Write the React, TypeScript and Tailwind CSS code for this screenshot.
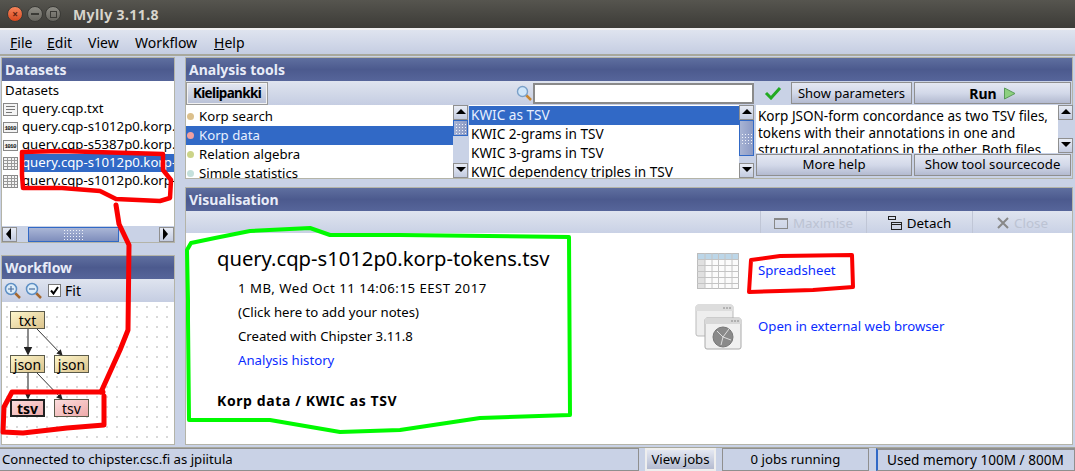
import React from "react";

const btn = "flex items-center justify-center border border-[#8f8f8f] bg-gradient-to-b from-[#e4e8f2] via-[#d3d9e9] to-[#b3bad0] text-black";

function Header({ children }: { children: React.ReactNode }) {
  return (
    <div className="h-[23px] shrink-0 flex items-center pl-[3px] text-[14px] font-bold text-[#e8ecf8] bg-gradient-to-b from-[#5f6f9f] via-[#4c5a8e] to-[#56659a]">
      {children}
    </div>
  );
}

function Arrow({ dir }: { dir: "up" | "down" | "left" | "right" }) {
  const p = { up: "1,7 6,2 11,7", down: "1,2 6,7 11,2", left: "7,0 2,6 7,12", right: "2,0 7,6 2,12" }[dir];
  return (
    <svg width="12" height="12" viewBox="0 0 12 12" className="block">
      <polygon points={p} fill="#000" />
    </svg>
  );
}

function ScrollBtn({ dir }: { dir: "up" | "down" | "left" | "right" }) {
  return (
    <div className="w-[15px] h-[15px] shrink-0 flex items-center justify-center border border-[#8f8f8f] bg-gradient-to-b from-[#e8ecf5] to-[#c3cbe0]">
      <Arrow dir={dir} />
    </div>
  );
}

function Dots() {
  return <div className="w-[11px] h-[11px] bg-[radial-gradient(#f0f3fa_0.8px,transparent_1px)] bg-[length:3px_3px]" />;
}

function VScroll({ thumb }: { thumb: number }) {
  return (
    <div className="w-[15px] shrink-0 flex flex-col bg-[#c9d2e6]">
      <ScrollBtn dir="up" />
      <div className="flex-1 min-h-0">
        {thumb > 0 && (
          <div
            className="border border-[#3169c6] bg-gradient-to-r from-[#a8b4d4] to-[#8c9ac4] flex items-center justify-center overflow-hidden"
            style={{ height: thumb }}
          >
            <Dots />
          </div>
        )}
      </div>
      <ScrollBtn dir="down" />
    </div>
  );
}

function Row({ icon, children, selected }: { icon: React.ReactNode; children: React.ReactNode; selected?: boolean }) {
  return (
    <div className="h-[18px] flex items-center whitespace-nowrap relative">
      <div className="w-[20px] shrink-0 flex justify-start pl-[1px]">{icon}</div>
      <div className={`flex-1 h-[18px] flex items-center overflow-hidden ${selected ? "bg-[#3169c6] text-white" : ""}`}>{children}</div>
    </div>
  );
}

function DocIcon() {
  return (
    <svg width="15" height="13" viewBox="0 0 15 13">
      <rect x="0.5" y="0.5" width="14" height="12" fill="#f4f4f4" stroke="#888" />
      <path d="M3 3.5h9M3 6.500h9M3 9.500h6" stroke="#777" />
    </svg>
  );
}
function BinIcon() {
  return (
    <svg width="15" height="13" viewBox="0 0 15 13">
      <rect x="0.5" y="1.5" width="14" height="10" fill="#f4f4f4" stroke="#888" />
      <text x="1.5" y="9" fontSize="6" fontWeight="700" fontFamily="Liberation Mono" fill="#111" textLength="12">1010</text>
    </svg>
  );
}
function TableIcon() {
  return (
    <svg width="15" height="13" viewBox="0 0 15 13">
      <rect x="0.5" y="0.5" width="14" height="12" fill="#f4f4f4" stroke="#888" />
      <path d="M0.5 3.5h14M0.5 6.500h14M0.5 9.500h14M4.500 0.5v12M8.500 0.5v12M11.500 0.5v12" stroke="#999" />
    </svg>
  );
}

function Zoom({ plus }: { plus: boolean }) {
  return (
    <svg width="18" height="18" viewBox="0 0 18 18">
      <path d="M10.500 10.500l5.500 5.500" stroke="#a5682f" strokeWidth="2.5" />
      <circle cx="7" cy="7" r="5.5" fill="#dcecf8" stroke="#5d8fc4" strokeWidth="1.5" />
      <path d={plus ? "M4 7h6M7 4v6" : "M4 7h6"} stroke="#4a6d9e" strokeWidth="1.2" />
    </svg>
  );
}

function Node({ label, x, y, pink, bold }: { label: string; x: number; y: number; pink?: boolean; bold?: boolean }) {
  return (
    <div
      className={`absolute w-[35px] h-[18px] flex items-center justify-center text-[14px] ${
        pink ? "bg-gradient-to-br from-[#fbdcdc] to-[#eeaaaa]" : "bg-gradient-to-br from-[#fdf6cc] to-[#dcc48c]"
      } ${bold ? "border-2 border-[#222] font-bold" : "border border-[#5a5a4a]"}`}
      style={{ left: x, top: y }}
    >
      {label}
    </div>
  );
}

function ToolItem({ color, children, selected }: { color: string; children: React.ReactNode; selected?: boolean }) {
  return (
    <div className={`h-[19px] shrink-0 flex items-center ${selected ? "bg-[#3169c6] text-[#e8f0ff]" : ""}`}>
      <span className="w-[7px] h-[7px] rounded-full ml-[1px] mr-[5px]" style={{ background: color }} />
      {children}
    </div>
  );
}

function Overlay() {
  return (
    <svg className="absolute left-0 top-0 pointer-events-none" width="1075" height="471" fill="none" strokeLinejoin="round" strokeLinecap="round">
      <path
        d="M22 152 L60 151 L163 154 L163 170 L171 180 L170 198 L160 201 L116 199 L100 191 L62 188 L23 188 L22 175 Z"
        stroke="#fb0000"
        strokeWidth="4.5"
      />
      <path d="M116 205 L119 224 L129 245 L128 330 L120 350 L101 392" stroke="#fb0000" strokeWidth="5" />
      <path d="M103 392 L40 392 L12 392 L4 407 L3 432 L23 433 L67 428 L104 425 L104 396" stroke="#fb0000" strokeWidth="5" />
      <path
        d="M188 300 L187 250 L191 243 L215 238 L250 231 L310 228 L330 235 L400 235 L569 237 L570 415 L480 418 L400 430 L340 432 L270 420 L189 420 L188 320 Z"
        stroke="#00fa00"
        strokeWidth="4"
      />
      <path d="M749 292 L751 260 L780 256 L852 255 L853 287 L813 290 L780 291 Z" stroke="#fb0000" strokeWidth="4" />
    </svg>
  );
}

export default function App() {
  return (
    <div className="relative w-[1075px] h-[471px] overflow-hidden flex flex-col bg-[#c9d2e6] text-[13.2px] text-black [font-family:'Noto_Sans','Open_Sans',sans-serif]">
      {/* title bar */}
      <div className="h-[28px] shrink-0 flex items-center bg-gradient-to-b from-[#56554f] to-[#3c3b37]">
        <span className="ml-[7px] w-[16px] h-[16px] rounded-full bg-gradient-to-b from-[#f5845a] to-[#d9481c] border border-[#3a3a36] flex items-center justify-center text-[10px] leading-none text-[#5a2210] font-bold">×</span>
        <span className="ml-[4px] w-[16px] h-[16px] rounded-full bg-gradient-to-b from-[#8d8c85] to-[#65645e] border border-[#3a3a36] flex items-center justify-center">
          <span className="w-[8px] h-[2px] bg-[#3a3a36]" />
        </span>
        <span className="ml-[2px] w-[16px] h-[16px] rounded-full bg-gradient-to-b from-[#8d8c85] to-[#65645e] border border-[#3a3a36] flex items-center justify-center">
          <span className="w-[7px] h-[7px] border border-[#3a3a36]" />
        </span>
        <span className="ml-[12px] text-[14px] font-bold tracking-[0.4px] text-[#d8d5cc]">Mylly 3.11.8</span>
      </div>
      {/* menu */}
      <div className="h-[28px] shrink-0 flex items-center pl-[10px] text-[14px] border-t-2 border-b-2 border-t-[#f0f0f0] border-b-[#a8a89c] bg-gradient-to-b from-[#dfe4ef] to-[#c5cde2]">
        <span className="w-[37px]"><u>F</u>ile</span>
        <span className="w-[41px]"><u>E</u>dit</span>
        <span className="w-[47px]">View</span>
        <span className="w-[79px]">Workflow</span>
        <span><u>H</u>elp</span>
      </div>
      {/* main */}
      <div className="flex-1 min-h-0 flex pt-[1px] pb-[2px] pl-[1px] pr-[2px] gap-[10px]">
        {/* left */}
        <div className="w-[174px] shrink-0 flex flex-col gap-[12px]">
          <div className="h-[186px] shrink-0 flex flex-col border border-[#b4b4a8]">
            <Header>Datasets</Header>
            <div className="flex-1 min-h-0 bg-white overflow-hidden pt-[1px]">
              <div className="h-[18px] flex items-center pl-[3px]">Datasets</div>
              <Row icon={<DocIcon />}>query.cqp.txt</Row>
              <Row icon={<BinIcon />}>query.cqp-s1012p0.korp.json</Row>
              <Row icon={<BinIcon />}>query.cqp-s5387p0.korp.json</Row>
              <Row icon={<TableIcon />} selected>query.cqp-s1012p0.korp-tokens.tsv</Row>
              <Row icon={<TableIcon />}>query.cqp-s1012p0.korp-tokens.tsv</Row>
            </div>
            <div className="h-[16px] shrink-0 flex bg-[#c9d2e6] pt-[0.5px]">
              <ScrollBtn dir="left" />
              <div className="flex-1 pl-[11px]">
                <div className="w-[91px] h-[15px] border border-[#3169c6] bg-gradient-to-b from-[#aab6d6] to-[#7f8ebc] flex items-center justify-center">
                  <div className="w-[22px] h-[11px] bg-[radial-gradient(#f0f3fa_0.8px,transparent_1px)] bg-[length:3px_3px]" />
                </div>
              </div>
              <ScrollBtn dir="right" />
            </div>
          </div>
          <div className="flex-1 min-h-0 flex flex-col border border-[#b4b4a8]">
            <Header>Workflow</Header>
            <div className="h-[23px] shrink-0 flex items-center pl-[2px] text-[14px] bg-gradient-to-b from-[#dfe4ef] to-[#c5cde2]">
              <Zoom plus />
              <span className="w-[3px]" />
              <Zoom plus={false} />
              <span className="ml-[5px] w-[13px] h-[13px] border border-[#777] bg-white flex items-center justify-center">
                <svg width="9" height="9" viewBox="0 0 9 9"><path d="M1 4.500l2.500 3L8 1" stroke="#000" strokeWidth="2" fill="none" /></svg>
              </span>
              <span className="ml-[4px]">Fit</span>
            </div>
            <div className="relative flex-1 min-h-0 bg-white bg-[radial-gradient(#c4c4c4_0.6px,transparent_0.9px)] bg-[length:10px_10px]">
              <svg className="absolute left-0 top-0" width="172" height="142" fill="none">
                <defs>
                  <marker id="a" markerWidth="6" markerHeight="6" refX="5" refY="3" orient="auto"><path d="M0 0L6 3L0 6Z" fill="#222" /></marker>
                </defs>
                <path d="M26 27V52" stroke="#666" strokeWidth="1.5" markerEnd="url(#a)" />
                <path d="M35 27L60 53" stroke="#333" markerEnd="url(#a)" />
                <path d="M26 71V96" stroke="#666" strokeWidth="1.5" markerEnd="url(#a)" />
                <path d="M35 71L60 97" stroke="#333" markerEnd="url(#a)" />
              </svg>
              <Node label="txt" x={8} y={9} />
              <Node label="json" x={8} y={53} />
              <Node label="json" x={52} y={53} />
              <Node label="tsv" x={8} y={97} pink bold />
              <Node label="tsv" x={52} y={97} pink />
            </div>
          </div>
        </div>
        {/* right */}
        <div className="flex-1 min-w-0 flex flex-col gap-[8px]">
          <div className="h-[122px] shrink-0 flex flex-col border border-[#b4b4a8]">
            <Header>Analysis tools</Header>
            <div className="flex-1 min-h-0 flex">
              <div className="w-[568px] shrink-0 flex flex-col">
                <div className="h-[24px] shrink-0 flex items-center bg-gradient-to-b from-[#dfe4ef] to-[#c5cde2]">
                  <div className="w-[82px] h-[23px] flex items-center justify-center text-[13.5px] tracking-[-0.65px] font-bold border border-[#999] shadow-[inset_0_0_0_1px_#f2f2f2] bg-gradient-to-b from-[#e4e8f2] to-[#b8c0d6]">Kielipankki</div>
                  <div className="flex-1" />
                  <svg width="16" height="16" viewBox="0 0 16 16" className="mr-[1px]">
                    <path d="M10 10l5 5" stroke="#c8852f" strokeWidth="2.5" />
                    <circle cx="6.5" cy="6.5" r="5" fill="#cfe6fa" stroke="#7aa0c8" strokeWidth="1.4" />
                  </svg>
                  <div className="w-[221px] h-[21px] border-2 border-[#8a8a8a] bg-white" />
                </div>
                <div className="flex-1 min-h-0 flex">
                  <div className="w-[267px] shrink-0 bg-white overflow-hidden flex flex-col pt-[2px]">
                    <ToolItem color="#dcc08c">Korp search</ToolItem>
                    <ToolItem color="#f0a0a0" selected>Korp data</ToolItem>
                    <ToolItem color="#ccd488">Relation algebra</ToolItem>
                    <ToolItem color="#c4e0dc">Simple statistics</ToolItem>
                  </div>
                  <VScroll thumb={16} />
                  <div className="w-[270px] shrink-0 text-[13.6px] bg-white overflow-hidden flex flex-col ml-[1px] pt-[1px]">
                    <div className="h-[19px] shrink-0 flex items-center pl-[2px] bg-[#3169c6] text-[#e8f0ff]">KWIC as TSV</div>
                    <div className="h-[19px] shrink-0 flex items-center pl-[2px]">KWIC 2-grams in TSV</div>
                    <div className="h-[19px] shrink-0 flex items-center pl-[2px]">KWIC 3-grams in TSV</div>
                    <div className="h-[19px] shrink-0 flex items-center pl-[2px]">KWIC dependency triples in TSV</div>
                  </div>
                  <VScroll thumb={36} />
                </div>
              </div>
              <div className="w-[317px] ml-[2px] shrink-0 flex flex-col">
                <div className="h-[24px] shrink-0 flex items-center gap-[2px]">
                  <div className="w-[33px] flex justify-center">
                    <svg width="18" height="14" viewBox="0 0 18 14"><path d="M2 7l5 5L16 2" stroke="#22aa22" strokeWidth="3" fill="none" /></svg>
                  </div>
                  <div className={`${btn} w-[121px] h-[22px] text-[13px] pt-[1px]`}>Show parameters</div>
                  <div className={`${btn} w-[157px] h-[22px] text-[14px] font-bold gap-[6px]`}>
                    Run
                    <svg width="13" height="13" viewBox="0 0 13 13"><polygon points="1.5,1 12,6.5 1.5,12" fill="#8dd080" stroke="#5a9a5a" /></svg>
                  </div>
                </div>
                <div className="h-[48px] shrink-0 flex">
                  <div className="flex-1 min-w-0 bg-white overflow-hidden pl-[2px] leading-[17px] pt-[3px] text-[13.5px]">
                    Korp JSON-form concordance as two TSV files, tokens with their annotations in one and structural annotations in the other. Both files
                  </div>
                  <VScroll thumb={0} />
                </div>
                <div className="flex-1 flex items-start gap-[2px] pt-[1px]">
                  <div className={`${btn} w-[156px] h-[22px] text-[13.2px]`}>More help</div>
                  <div className={`${btn} w-[157px] h-[22px] text-[13.2px]`}>Show tool sourcecode</div>
                </div>
              </div>
            </div>
          </div>
          <div className="flex-1 min-h-0 flex flex-col border border-[#b4b4a8]">
            <Header>Visualisation</Header>
            <div className="h-[22px] shrink-0 flex justify-end items-center text-[13.4px] bg-gradient-to-b from-[#dfe4ef] to-[#c9d1e5]">
              <div className="w-[106px] h-full pt-[2px] flex items-center justify-center gap-[5px] border-l border-[#c0c6d6] text-[#bcc3d3]">
                <svg width="14" height="11" viewBox="0 0 14 11"><rect x="0.5" y="0.5" width="13" height="10" fill="none" stroke="#888" strokeWidth="1" /><path d="M0 1.5h14" stroke="#888" /></svg>
                Maximise
              </div>
              <div className="w-[106px] h-full pt-[2px] flex items-center justify-center gap-[5px] border-l border-[#c0c6d6]">
                <svg width="14" height="14" viewBox="0 0 14 14" fill="none" stroke="#222"><rect x="0.5" y="0.5" width="7" height="3" /><rect x="3.5" y="6.5" width="10" height="7" /><path d="M3.5 8.5h10" /></svg>
                Detach
              </div>
              <div className="w-[100px] h-full pt-[2px] flex items-center justify-center gap-[5px] border-l border-[#c0c6d6] text-[#bcc3d3]">
                <svg width="12" height="12" viewBox="0 0 12 12"><path d="M1 1l10 10M11 1L1 11" stroke="#888" strokeWidth="2" /></svg>
                Close
              </div>
            </div>
            <div className="flex-1 min-h-0 bg-white flex">
              <div className="w-[511px] shrink-0 pl-[31px] pt-[11px]">
                <div className="text-[20.2px] leading-[28px] whitespace-nowrap">query.cqp-s1012p0.korp-tokens.tsv</div>
                <div className="pl-[21px] leading-[24px] mt-[4px]">
                  <div className="tracking-[0.5px]">1 MB, Wed Oct 11 14:06:15 EEST 2017</div>
                  <div>(Click here to add your notes)</div>
                  <div>Created with Chipster 3.11.8</div>
                  <div className="text-[#0a2cff]">Analysis history</div>
                </div>
                <div className="font-bold text-[14px] tracking-[0.6px] mt-[18px]">Korp data / KWIC as TSV</div>
              </div>
              <div className="flex-1 pt-[19px] flex flex-col">
                <div className="h-[37px] flex items-center">
                  <svg width="44" height="36" viewBox="0 0 44 36">
                    <rect x="0.5" y="0.5" width="41" height="35" fill="#fbfbfb" stroke="#bdbdbd" />
                    <rect x="1" y="1" width="40" height="5" fill="#bcd6e8" />
                    <rect x="1" y="6" width="7" height="29" fill="#e0e0e0" />
                    <path d="M8 0v36M15 0v36M21.500 0v36M28 0v36M35 0v36M0 6.500h42M0 12.500h42M0 18.500h42M0 24.500h42M0 30.500h42" stroke="#c4c4c4" />
                  </svg>
                  <span className="ml-[17px] text-[#0a2cff]">Spreadsheet</span>
                </div>
                <div className="h-[46px] mt-[15px] flex items-center">
                  <svg width="48" height="46" viewBox="0 0 48 46" className="-ml-[2px]">
                    <rect x="1" y="1" width="37" height="31" rx="2" fill="#eee" stroke="#bbb" />
                    <rect x="1" y="1" width="37" height="6" fill="#ddd" />
                    <path d="M28 4h8" stroke="#888" strokeDasharray="2 1" />
                    <rect x="10" y="14" width="36" height="31" rx="2" fill="#f0f0f0" stroke="#aaa" />
                    <rect x="10" y="14" width="36" height="6" fill="#d8d8d8" />
                    <path d="M36 17h8" stroke="#888" strokeDasharray="2 1" />
                    <circle cx="28" cy="33" r="10" fill="#8a8a8a" stroke="#777" />
                    <path d="M22 27l6 6 6-8M28 33l-2 8M28 33l8 3" stroke="#ddd" strokeWidth="1" fill="none" />
                  </svg>
                  <span className="ml-[15px] text-[#0a2cff]">Open in external web browser</span>
                </div>
              </div>
            </div>
          </div>
        </div>
      </div>
      {/* status */}
      <div className="h-[24px] shrink-0 flex gap-[6px] items-stretch border-t border-[#a8a89c] bg-[#c9d2e6]">
        <div className="w-[639px] border border-[#8f8f8f] border-l-0 flex items-center pl-[2px]">Connected to chipster.csc.fi as jpiitula</div>
        <div className="w-[71px] border-2 border-[#eee] bg-gradient-to-b from-[#e4e8f2] to-[#b3bad0] flex items-center justify-center">View jobs</div>
        <div className="w-[147px] border border-[#8f8f8f] flex items-center justify-center">0 jobs running</div>
        <div className="flex-1 ml-[1px] border border-[#8f8f8f] border-l-2 border-t-2 border-l-[#3169c6] flex items-center pl-[9px] text-[13.6px] whitespace-nowrap">Used memory 100M / 800M</div>
      </div>
      <Overlay />
    </div>
  );
}
